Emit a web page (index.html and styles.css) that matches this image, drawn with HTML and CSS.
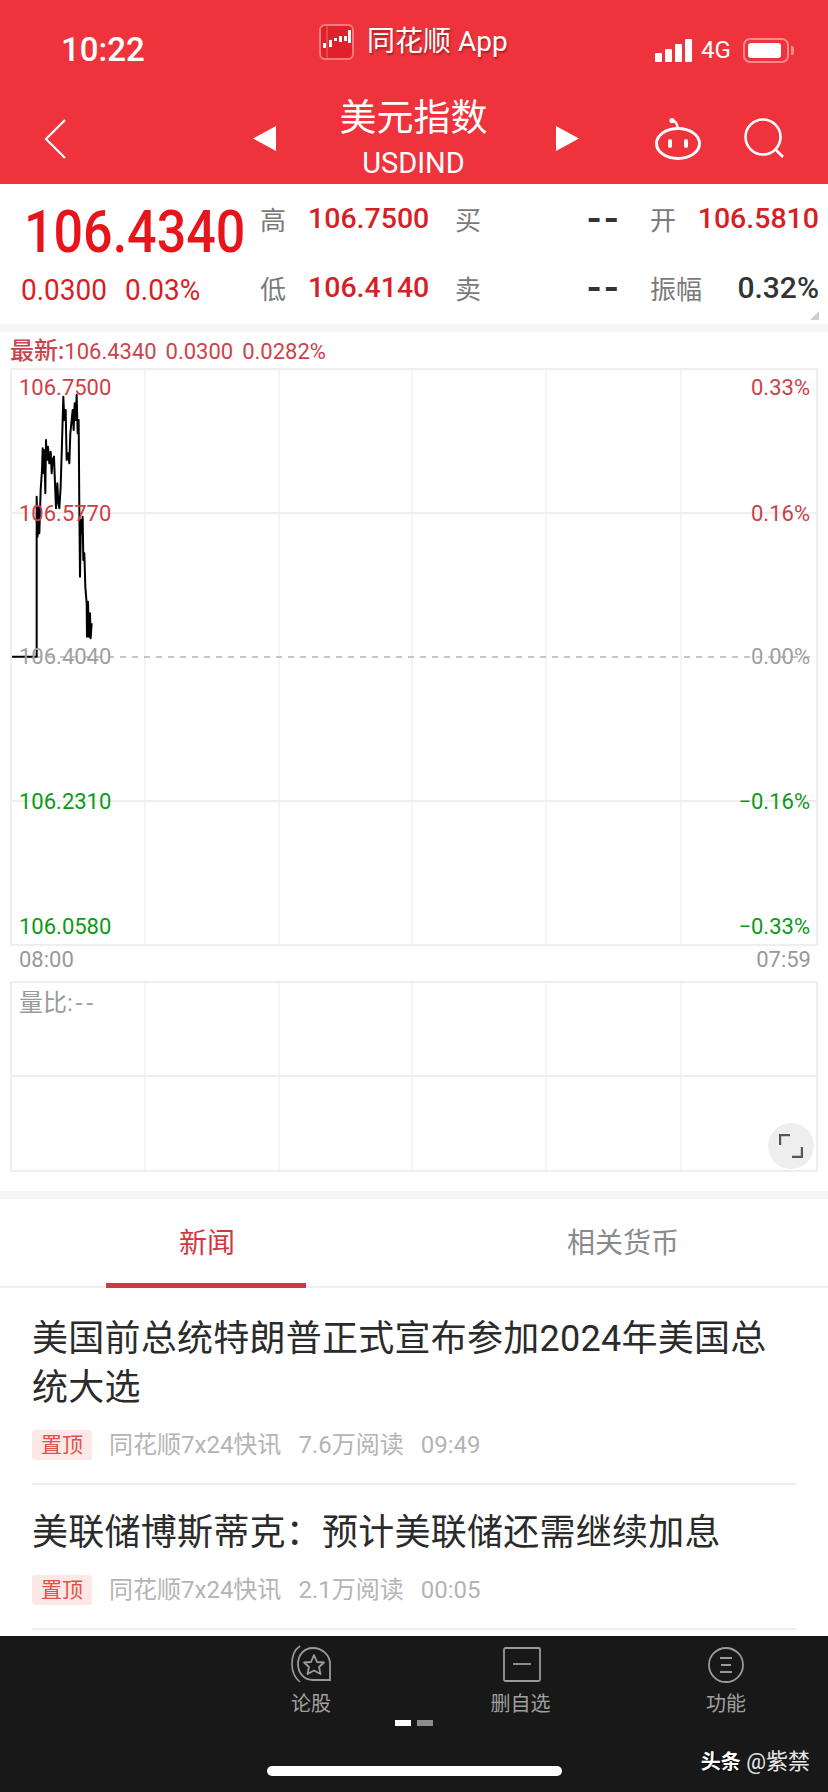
FILE: index.html
```html
<!DOCTYPE html>
<html>
	<head>
		<meta charset="utf-8">
		<link rel="stylesheet" href="styles.css">
	</head>
	<body>
		<div class="page">
			<div class="header">
				<div class="status">
					<div class="time">10:22</div>
					<div class="carrier">
						<svg class="app-logo" viewBox="0 0 35 36">
							<rect x="1" y="1" width="33" height="34" rx="5" fill="#e0202a" stroke="#fa7a7e" stroke-width="2"/>
							<path d="M8 2V34" stroke="#f06a6e" stroke-width="1"/>
							<path d="M4 19h3v5H4zM10 16h3v7h-3zM15 14h3v3h-3zM20 12h3v6h-3zM25 12h3v5h-3zM29 6h3v13h-3z" fill="#fff"/>
						</svg>
						<span class="carrier-name">同花顺 App</span>
					</div>
					<div class="indicators">
						<div class="signal">
							<span class="bar bar-1"></span>
							<span class="bar bar-2"></span>
							<span class="bar bar-3"></span>
							<span class="bar bar-4"></span>
						</div>
						<span class="net">4G</span>
						<div class="battery"><span class="battery-fill"></span></div>
						<span class="battery-nub"></span>
					</div>
				</div>
				<div class="nav">
					<svg class="back" viewBox="0 0 23 40">
						<polyline points="21,1 2,20 21,39" fill="none" stroke="#fff" stroke-width="2.2"/>
					</svg>
					<div class="switcher">
						<svg class="arrow" viewBox="0 0 23 25"><polygon points="23,0 23,25 0,12.5" fill="#fff"/></svg>
						<div class="title">
							<div class="title-name">美元指数</div>
							<div class="title-code">USDIND</div>
						</div>
						<svg class="arrow" viewBox="0 0 23 25"><polygon points="0,0 0,25 23,12.5" fill="#fff"/></svg>
					</div>
					<div class="nav-icons">
						<svg class="robot" viewBox="0 0 46 42">
							<ellipse cx="23" cy="25.5" rx="21.5" ry="15" fill="none" stroke="#fff" stroke-width="3"/>
							<path d="M18 3c2 0 4 2 5 8" fill="none" stroke="#fff" stroke-width="2.5"/>
							<circle cx="17" cy="2.6" r="2.6" fill="#fff"/>
							<rect x="13" y="21" width="4" height="9" rx="2" fill="#fff"/>
							<rect x="29" y="21" width="4" height="9" rx="2" fill="#fff"/>
						</svg>
						<svg class="search" viewBox="0 0 41 40">
							<circle cx="19" cy="19" r="17.5" fill="none" stroke="#fff" stroke-width="2.6"/>
							<line x1="31" y1="31" x2="39" y2="39" stroke="#fff" stroke-width="2.6"/>
						</svg>
					</div>
				</div>
			</div>

			<div class="quote">
				<div class="quote-main">
					<div class="price">106.4340</div>
					<div class="change"><span>0.0300</span><span>0.03%</span></div>
				</div>
				<div class="quote-grid">
					<span class="cell-label">高</span>
					<span class="cell-value">106.7500</span>
					<span class="cell-label">买</span>
					<span class="cell-dash">--</span>
					<span class="cell-label">开</span>
					<span class="cell-value cell-end">106.5810</span>
					<span class="cell-label">低</span>
					<span class="cell-value">106.4140</span>
					<span class="cell-label">卖</span>
					<span class="cell-dash">--</span>
					<span class="cell-label">振幅</span>
					<span class="cell-value cell-end cell-dark">0.32%</span>
				</div>
				<span class="corner"></span>
			</div>

			<div class="chart-section">
				<div class="latest"><b>最新:</b>106.4340&nbsp; 0.0300&nbsp; 0.0282%</div>
				<div class="chart">
					<svg class="chart-svg" viewBox="0 0 804 574">
						<g stroke="#f2f2f2" stroke-width="1.5">
							<line x1="133" y1="0" x2="133" y2="574"/>
							<line x1="267" y1="0" x2="267" y2="574"/>
							<line x1="400" y1="0" x2="400" y2="574"/>
							<line x1="534" y1="0" x2="534" y2="574"/>
							<line x1="669" y1="0" x2="669" y2="574"/>
						</g>
						<g stroke="#eeeeee" stroke-width="2">
							<line x1="0" y1="143" x2="804" y2="143"/>
							<line x1="0" y1="431" x2="804" y2="431"/>
						</g>
						<line x1="0" y1="287" x2="804" y2="287" stroke="#b4b4b4" stroke-width="1.5" stroke-dasharray="6 6"/>
						<g transform="translate(-12 -10) scale(.3333)">
							<polyline fill="none" stroke="#000" stroke-width="6" stroke-linejoin="round"
								points="35,890 110,890 110,410 113,530 116,440 118,520 122,390 126,330 128,265 131,340 133,270 136,400 138,240 141,300 144,260 148,310 152,275 155,340 158,300 162,290 165,370 168,445 172,370 175,430 178,445 182,380 186,250 190,110 193,180 197,150 200,300 204,280 208,310 211,220 214,190 218,150 221,210 224,130 227,180 230,105 233,220 236,180 238,440 240,650 243,480 246,520 248,470 250,600 253,580 256,680 260,730 261,830 264,725 267,830 270,760 272,835 275,790"/>
						</g>
					</svg>
					<span class="axis axis-left label-top up">106.7500</span>
					<span class="axis axis-left label-upper up">106.5770</span>
					<span class="axis axis-left label-mid flat">106.4040</span>
					<span class="axis axis-left label-lower down">106.2310</span>
					<span class="axis axis-left label-bottom down">106.0580</span>
					<span class="axis axis-right label-top up">0.33%</span>
					<span class="axis axis-right label-upper up">0.16%</span>
					<span class="axis axis-right label-mid flat">0.00%</span>
					<span class="axis axis-right label-lower down">−0.16%</span>
					<span class="axis axis-right label-bottom down">−0.33%</span>
				</div>
				<div class="times"><span>08:00</span><span>07:59</span></div>
				<div class="volume">
					<svg class="chart-svg" viewBox="0 0 804 187">
						<g stroke="#f2f2f2" stroke-width="1.5">
							<line x1="133" y1="0" x2="133" y2="187"/>
							<line x1="267" y1="0" x2="267" y2="187"/>
							<line x1="400" y1="0" x2="400" y2="187"/>
							<line x1="534" y1="0" x2="534" y2="187"/>
							<line x1="669" y1="0" x2="669" y2="187"/>
						</g>
						<line x1="0" y1="93" x2="804" y2="93" stroke="#eeeeee" stroke-width="2"/>
					</svg>
					<span class="volume-label">量比:<span class="volume-dash">--</span></span>
					<div class="expand">
						<svg viewBox="0 0 24 24" class="expand-icon">
							<polyline points="1,11 1,1 11,1" fill="none" stroke="#555" stroke-width="2.4"/>
							<polyline points="13,23 23,23 23,13" fill="none" stroke="#555" stroke-width="2.4"/>
						</svg>
					</div>
				</div>
			</div>

			<div class="tabs">
				<div class="tab tab-on">新闻</div>
				<div class="tab tab-right">相关货币</div>
			</div>

			<div class="news">
				<div class="news-item first">
					<div class="news-title">美国前总统特朗普正式宣布参加2024年美国总统大选</div>
					<div class="news-meta">
						<span class="pin">置顶</span>
						<span>同花顺7x24快讯</span>
						<span>7.6万阅读</span>
						<span>09:49</span>
					</div>
				</div>
				<div class="news-item">
					<div class="news-title">美联储博斯蒂克：预计美联储还需继续加息</div>
					<div class="news-meta">
						<span class="pin">置顶</span>
						<span>同花顺7x24快讯</span>
						<span>2.1万阅读</span>
						<span>00:05</span>
					</div>
				</div>
			</div>

			<div class="footer">
				<div class="actions">
					<div class="action">
						<svg class="action-icon" viewBox="0 0 40 38">
							<path d="M9 1C3 5 1 11 1 19c0 8 3 14 8 18" fill="none" stroke="#9a9a9a" stroke-width="1.6"/>
							<path d="M7 19C7 10 13 3 22 3s17 7 17 16v16H22C13 35 7 28 7 19z" fill="none" stroke="#9a9a9a" stroke-width="1.8"/>
							<polygon points="23,10 26,17 33,17.5 28,22 29.5,29 23,25.5 16.5,29 18,22 13,17.5 20,17" fill="none" stroke="#9a9a9a" stroke-width="1.8" stroke-linejoin="round"/>
						</svg>
						<span>论股</span>
					</div>
					<div class="action">
						<svg class="action-icon" viewBox="0 0 40 38">
							<rect x="3" y="3" width="36" height="33" rx="1.5" fill="none" stroke="#9a9a9a" stroke-width="1.8"/>
							<line x1="12" y1="19" x2="30" y2="19" stroke="#9a9a9a" stroke-width="1.8"/>
						</svg>
						<span>删自选</span>
					</div>
					<div class="action">
						<svg class="action-icon" viewBox="0 0 40 38">
							<circle cx="20" cy="20" r="17" fill="none" stroke="#9a9a9a" stroke-width="1.8"/>
							<path d="M14 13h12M15 20h10M14 27h12" stroke="#9a9a9a" stroke-width="1.8"/>
						</svg>
						<span>功能</span>
					</div>
				</div>
				<div class="pager"><span class="pager-on"></span><span class="pager-off"></span></div>
				<div class="home"></div>
				<div class="watermark"><b>头条</b> @紫禁</div>
			</div>
		</div>
	</body>
</html>
```

FILE: styles.css
```css
*{
	margin: 0;
	padding: 0;
	box-sizing: border-box;
}
html,body{
	width: 828px;
	height: 1792px;
	overflow: hidden;
	background: #fff;
}
body{
	font-family: Roboto, "Noto Sans CJK SC", sans-serif;
}
.page{
	width: 828px;
	height: 1792px;
	display: flex;
	flex-direction: column;
	background: #f5f5f5;
}

/* red header */
.header{
	height: 184px;
	background: #ee333c;
	color: #fff;
	flex: none;
}
.status{
	height: 84px;
	display: grid;
	grid-template-columns: 319px 1fr auto;
	padding: 0 34px 0 0;
}
.time{
	padding: 31px 0 0 61px;
	font-size: 33px;
	line-height: 38px;
	font-weight: 500;
}
.carrier{
	display: flex;
	align-items: flex-start;
	padding-top: 24px;
	gap: 13px;
}
.app-logo{
	width: 35px;
	height: 36px;
}
.carrier-name{
	font-size: 28px;
	line-height: 36px;
	text-shadow: 1px 2px 2px rgba(110,20,20,.6);
	white-space: nowrap;
}
.indicators{
	display: flex;
	align-items: center;
	height: 26px;
	margin-top: 37px;
}
.signal{
	display: flex;
	align-items: flex-end;
	gap: 3px;
	height: 24px;
}
.bar{
	width: 7px;
	background: #fff;
	border-radius: 1px;
}
.bar-1{ height: 9px; }
.bar-2{ height: 13px; }
.bar-3{ height: 18px; }
.bar-4{ height: 23px; }
.net{
	font-size: 24px;
	margin-left: 9px;
	width: 42px;
}
.battery{
	width: 46px;
	height: 25px;
	border: 2px solid #fb8b8e;
	border-radius: 7px;
	padding: 3px;
}
.battery-fill{
	display: block;
	width: 33px;
	height: 15px;
	background: #fff;
	border-radius: 3px;
}
.battery-nub{
	width: 3px;
	height: 9px;
	background: #fb8b8e;
	margin-left: 2px;
	border-radius: 0 2px 2px 0;
}
.nav{
	height: 100px;
	display: grid;
	grid-template-columns: 253px 326px 1fr;
}
.back{
	width: 23px;
	height: 40px;
	margin: 35px 0 0 44px;
}
.switcher{
	display: flex;
	justify-content: space-between;
	align-items: flex-start;
}
.arrow{
	width: 23px;
	height: 25px;
	margin-top: 42px;
}
.title{
	text-align: center;
	flex: 1;
	padding-right: 5px;
}
.title-name{
	font-size: 37px;
	line-height: 40px;
	margin-top: 15px;
}
.title-code{
	font-size: 29px;
	line-height: 32px;
	margin-top: 8px;
}
.nav-icons{
	display: flex;
	align-items: flex-start;
	gap: 43px;
	padding: 34px 0 0 76px;
}
.robot{
	width: 46px;
	height: 42px;
}
.search{
	width: 41px;
	height: 40px;
}

/* quote block */
.quote{
	height: 140px;
	display: flex;
	flex: none;
	position: relative;
	background: #fff;
}
.quote-main{
	width: 260px;
	color: #e8141c;
}
.price{
	padding-left: 24px;
	margin-top: 18px;
	font-size: 52px;
	line-height: 62px;
	font-weight: 500;
	transform: scaleY(1.13);
}
.change{
	display: flex;
	gap: 18px;
	padding-left: 21px;
	margin-top: 8px;
	font-size: 28px;
	line-height: 36px;
	color: #d81e26;
	transform: scaleY(1.08);
}
.quote-grid{
	display: grid;
	grid-template-columns: 48px 147px 132px 63px 49px 120px;
	grid-template-rows: 69px 69px;
	align-items: center;
	white-space: nowrap;
	font-size: 28.5px;
	height: 138px;
}
.cell-label{
	font-size: 26px;
	color: #7a7a7a;
}
.cell-value{
	color: #d81e26;
	font-weight: 500;
}
.cell-end{
	justify-self: end;
}
.cell-dark{
	color: #333;
	font-size: 30px;
}
.cell-dash{
	color: #333;
	font-size: 42px;
	font-weight: 500;
	line-height: 1;
	letter-spacing: 3px;
}
.corner{
	position: absolute;
	right: 9px;
	bottom: 4px;
	border-left: 9px solid transparent;
	border-bottom: 9px solid #cfcfcf;
}

/* intraday chart */
.chart-section{
	margin-top: 8px;
	height: 859px;
	flex: none;
	padding: 0 10px;
	background: #fff;
}
.latest{
	height: 36px;
	padding-top: 3px;
	font-size: 22px;
	line-height: 32px;
	word-spacing: -1px;
	color: #cb434b;
	white-space: nowrap;
}
.latest b{
	font-weight: 500;
	font-size: 24px;
}
.chart{
	position: relative;
	height: 578px;
	border: 2px solid #eeeeee;
}
.chart-svg{
	display: block;
	width: 100%;
	height: 100%;
}
.axis{
	position: absolute;
	font-size: 22px;
	line-height: 26px;
	height: 26px;
}
.axis-left{ left: 7px; }
.axis-right{ right: 6px; }
.label-top{ top: 5px; }
.label-upper{ top: 131px; }
.label-mid{ top: 274px; }
.label-lower{ top: 419px; }
.label-bottom{ top: 544px; }
.up{ color: #cf3e47; }
.flat{ color: #a0a0a0; }
.down{ color: #0c9a16; }
.times{
	display: flex;
	justify-content: space-between;
	height: 35px;
	padding: 0 7px 0 9px;
	font-size: 22px;
	line-height: 28px;
	color: #999;
}
.volume{
	position: relative;
	height: 191px;
	border: 2px solid #eeeeee;
}
.volume-label{
	position: absolute;
	left: 7px;
	top: 5px;
	font-size: 24px;
	line-height: 30px;
	color: #9a9a9a;
}
.volume-dash{
	letter-spacing: 4px;
	margin-left: 3px;
}
.expand{
	position: absolute;
	right: 2px;
	bottom: 1px;
	width: 46px;
	height: 46px;
	border-radius: 50%;
	background: #eeeeee;
	display: flex;
	align-items: center;
	justify-content: center;
}
.expand-icon{
	width: 24px;
	height: 24px;
}

/* tabs and news */
.tabs{
	margin-top: 8px;
	height: 89px;
	flex: none;
	display: flex;
	border-bottom: 2px solid #eeeeee;
	background: #fff;
}
.tab{
	width: 414px;
	text-align: center;
	font-size: 28px;
	line-height: 90px;
	color: #8a8a8a;
	position: relative;
}
.tab-right{
	padding-left: 4px;
}
.tab-on{
	color: #cf3a42;
}
.tab-on::after{
	content: "";
	position: absolute;
	left: 106px;
	bottom: -2px;
	width: 200px;
	height: 5px;
	background: #cf3a42;
}
.news{
	flex: 1;
	overflow: hidden;
	padding: 0 32px;
	background: #fff;
}
.news-item{
	padding: 24px 0 23px;
	border-bottom: 2px solid #eeeeee;
}
.news-item.first{
	padding-top: 27px;
}
.news-title{
	font-size: 36px;
	line-height: 49px;
	letter-spacing: .25px;
	color: #2b2b2b;
}
.news-meta{
	display: flex;
	align-items: center;
	margin-top: 17px;
	gap: 17px;
	font-size: 24px;
	line-height: 30px;
	color: #b4b4b4;
	white-space: nowrap;
}
.pin{
	width: 60px;
	height: 30px;
	text-align: center;
	font-size: 21px;
	line-height: 30px;
	color: #e2504a;
	background: #fde8e8;
	border-radius: 3px;
}

/* bottom bar */
.footer{
	height: 156px;
	flex: none;
	background: #181818;
	position: relative;
}
.actions{
	display: grid;
	grid-template-columns: 208px 211px 200px;
	padding: 9px 0 0 207px;
}
.action{
	display: flex;
	flex-direction: column;
	align-items: center;
	font-size: 20px;
	line-height: 26px;
	color: #a0a0a0;
}
.action-icon{
	width: 40px;
	height: 38px;
	margin-bottom: 8px;
}
.pager{
	display: flex;
	justify-content: center;
	gap: 6px;
	margin-top: 3px;
}
.pager span{
	width: 16px;
	height: 6px;
}
.pager-on{ background: #fff; }
.pager-off{ background: #8e8e8e; }
.home{
	width: 295px;
	height: 10px;
	margin: 40px 0 0 267px;
	border-radius: 5px;
	background: #fff;
}
.watermark{
	position: absolute;
	right: 18px;
	top: 113px;
	font-size: 22px;
	line-height: 26px;
	color: #e8e8e8;
	white-space: nowrap;
}
.watermark b{
	color: #fff;
	font-size: 20px;
	font-weight: 700;
	text-shadow: 1px 1px 1px #000;
}
```
